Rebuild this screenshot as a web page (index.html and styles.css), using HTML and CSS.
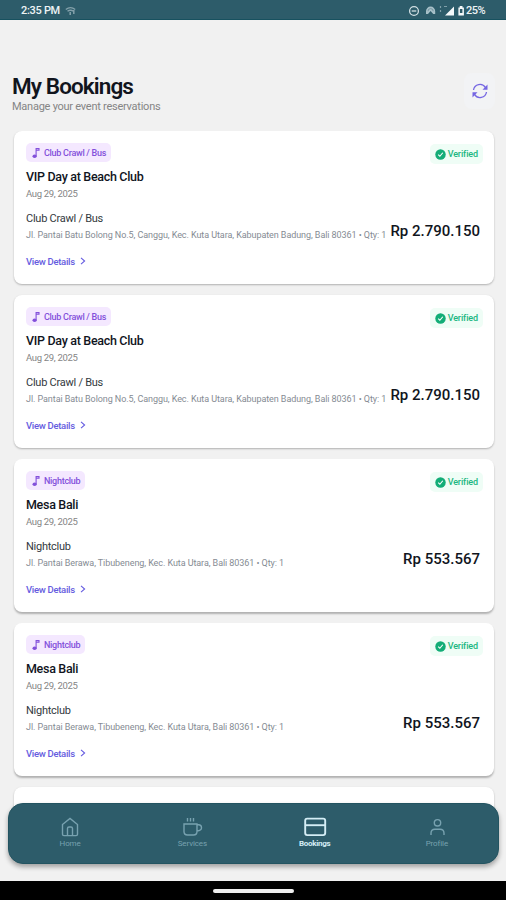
FILE: index.html
```html
<!DOCTYPE html>
<html lang="en">
<head>
<meta charset="utf-8">
<title>My Bookings</title>
<link rel="stylesheet" href="styles.css">
</head>
<body>
<svg class="defs" width="0" height="0">
  <symbol id="note" viewBox="0 0 10 12"><ellipse cx="3.6" cy="9.2" rx="2.1" ry="1.8" fill="currentColor"/><path d="M5.1 9.2V1.600H8v1.600H5.1" fill="none" stroke="currentColor" stroke-width="1.1"/></symbol>
  <symbol id="check" viewBox="0 0 12 12"><circle cx="6" cy="6" r="5.7" fill="currentColor"/><path d="M3.5 6.2l1.8 1.7 3.2-3.8" fill="none" stroke="#fff" stroke-width="1.2"/></symbol>
  <symbol id="chevron" viewBox="0 0 6 8"><path d="M1 .8L4.6 4 1 7.2" fill="none" stroke="currentColor" stroke-width="1.1"/></symbol>
</svg>
<div class="screen">
  <div class="status">
    <span class="time">2:35 PM</span>
    <svg class="wifi" width="11" height="10" viewBox="0 0 11 10" fill="none" stroke="#a9bfc7"><path d="M.8 3.500Q5.500-.3 10.200 3.500M2.500 5.300q3-2.200 6 0" stroke-width="1.400"/><path d="M5.200 6v3M8.800 4v4" stroke-width="1.500"/></svg>
    <div class="indicators">
      <svg width="58" height="14" viewBox="0 0 58 14">
        <g fill="none" stroke="#d3e0e4" stroke-width="1.300"><circle cx="6" cy="7" r="4.400"/><path d="M3.700 7h4.600"/></g>
        <path d="M18 10V7.200a4.600 4.600 0 0 1 9.200 0V10h-2l-2.600-3-2.600 3z" fill="#a7c0c8"/>
        <path d="M20 7.200a2.600 2.600 0 0 1 5.200 0" fill="none" stroke="#5e838f" stroke-width=".7"/>
        <path d="M32.500 2v2M32.500 6v2M36 2.500h3" stroke="#7f9fa9" stroke-width="1.200"/>
        <path d="M37 11.500L46 2.500v9z" fill="#f5f9fa"/>
        <path d="M51.700 2h2.800v1.400h1.400v8.200h-5.500V3.400h1.300z" fill="#f5f9fa"/><rect x="51.900" y="5" width="2.500" height="4" fill="#2d5c6a"/>
      </svg>
      <span class="percent">25%</span>
    </div>
  </div>
  <header class="header">
    <div>
      <h1 class="heading">My Bookings</h1>
      <p class="subtitle">Manage your event reservations</p>
    </div>
    <div class="refresh">
      <svg width="16" height="16" viewBox="0 0 16 16" fill="none" stroke="#7566e2" stroke-width="1.300"><path d="M1.500 7A6.500 6.500 0 0 1 13.500 4.600M14.500 9A6.500 6.500 0 0 1 2.500 11.400"/><path d="M15.500 1.500v5.200h-5zM.5 14.500V9.300h5z" fill="#7566e2" stroke="none"/></svg>
    </div>
  </header>
  <main class="list">
    <article class="card">
      <div class="top"><span class="tag"><svg width="10" height="12"><use href="#note"/></svg><span>Club Crawl / Bus</span></span><span class="verified"><svg width="11" height="11"><use href="#check"/></svg>Verified</span></div>
      <h2 class="title">VIP Day at Beach Club</h2>
      <p class="date">Aug 29, 2025</p>
      <div class="details"><div><p class="kind">Club Crawl / Bus</p><p class="address">Jl. Pantai Batu Bolong No.5, Canggu, Kec. Kuta Utara, Kabupaten Badung, Bali 80361 • Qty: 1</p></div><strong class="price">Rp 2.790.150</strong></div>
      <a class="view"><span>View Details</span><svg width="6" height="8"><use href="#chevron"/></svg></a>
    </article>
    <article class="card">
      <div class="top"><span class="tag"><svg width="10" height="12"><use href="#note"/></svg><span>Club Crawl / Bus</span></span><span class="verified"><svg width="11" height="11"><use href="#check"/></svg>Verified</span></div>
      <h2 class="title">VIP Day at Beach Club</h2>
      <p class="date">Aug 29, 2025</p>
      <div class="details"><div><p class="kind">Club Crawl / Bus</p><p class="address">Jl. Pantai Batu Bolong No.5, Canggu, Kec. Kuta Utara, Kabupaten Badung, Bali 80361 • Qty: 1</p></div><strong class="price">Rp 2.790.150</strong></div>
      <a class="view"><span>View Details</span><svg width="6" height="8"><use href="#chevron"/></svg></a>
    </article>
    <article class="card raised">
      <div class="top"><span class="tag"><svg width="10" height="12"><use href="#note"/></svg><span>Nightclub</span></span><span class="verified"><svg width="11" height="11"><use href="#check"/></svg>Verified</span></div>
      <h2 class="title">Mesa Bali</h2>
      <p class="date">Aug 29, 2025</p>
      <div class="details"><div><p class="kind">Nightclub</p><p class="address">Jl. Pantai Berawa, Tibubeneng, Kec. Kuta Utara, Bali 80361 • Qty: 1</p></div><strong class="price">Rp 553.567</strong></div>
      <a class="view"><span>View Details</span><svg width="6" height="8"><use href="#chevron"/></svg></a>
    </article>
    <article class="card raised">
      <div class="top"><span class="tag"><svg width="10" height="12"><use href="#note"/></svg><span>Nightclub</span></span><span class="verified"><svg width="11" height="11"><use href="#check"/></svg>Verified</span></div>
      <h2 class="title">Mesa Bali</h2>
      <p class="date">Aug 29, 2025</p>
      <div class="details"><div><p class="kind">Nightclub</p><p class="address">Jl. Pantai Berawa, Tibubeneng, Kec. Kuta Utara, Bali 80361 • Qty: 1</p></div><strong class="price">Rp 553.567</strong></div>
      <a class="view"><span>View Details</span><svg width="6" height="8"><use href="#chevron"/></svg></a>
    </article>
    <article class="card"></article>
  </main>
  <nav class="nav">
    <div class="item"><svg width="24" height="24" viewBox="0 0 24 24" fill="none" stroke="currentColor" stroke-width="1.400"><path d="M4.500 9.500L12 3.500l7.500 6v9.700q0 1.400-1.400 1.400H5.900q-1.400 0-1.400-1.400zM9.500 20.500v-7q0-1.500 1.500-1.500h2q1.500 0 1.500 1.500v7"/></svg><span>Home</span></div>
    <div class="item"><svg width="24" height="24" viewBox="0 0 24 24" fill="none" stroke="currentColor" stroke-width="1.400"><path d="M4 9h13v7.500q0 3.500-3.500 3.500h-6Q4 20 4 16.500zM17 9.700h1.500a2.300 2.300 0 0 1 0 6H17M7.500 3v3.500M10.500 3v3.500M13.500 3v3.500"/></svg><span>Services</span></div>
    <div class="item active"><svg width="24" height="24" viewBox="0 0 24 24" fill="none" stroke="currentColor" stroke-width="1.900"><rect x="2.200" y="3.600" width="20" height="16.500" rx="2"/><path d="M2.200 10.200h20"/></svg><span>Bookings</span></div>
    <div class="item"><svg width="24" height="24" viewBox="0 0 24 24" fill="none" stroke="currentColor" stroke-width="1.400"><circle cx="12.500" cy="7.800" r="3.200"/><path d="M6 20v-1.700q0-4 4-4h5q4 0 4 4V20"/></svg><span>Profile</span></div>
  </nav>
  <div class="system"><i class="handle"></i></div>
</div>
</body>
</html>
```
FILE: styles.css
```css
* { box-sizing: border-box; margin: 0; padding: 0; }
body { font-family: Roboto, sans-serif; background: #f1f1f1; color: #11151d; }
.defs { position: absolute; }
.screen { position: relative; display: flex; flex-direction: column; width: 506px; height: 900px; overflow: hidden; background: #f1f1f1; white-space: nowrap; }
.status { flex: none; height: 20px; display: flex; align-items: center; padding: 2px 19px 0 21px; background: #2d5c6a; border-bottom: 1px solid #17515f; color: #edf3f5; font-size: 11px; font-weight: 500; }
.time { width: 44px; letter-spacing: -.3px; }
.indicators { display: flex; align-items: center; margin-left: auto; }
.percent { width: 21px; letter-spacing: -.5px; }
.wifi { opacity: .7; }
.header { flex: none; height: 112px; display: flex; justify-content: space-between; padding: 53px 11px 0 12px; }
.heading { font-size: 22.500px; line-height: 27px; font-weight: 600; letter-spacing: -.9px; }
.subtitle { font-size: 11px; line-height: 14px; letter-spacing: -.25px; color: #858585; }
.refresh { display: grid; place-items: center; width: 31px; height: 36px; border-radius: 8px; background: #f2f3f5; }
.list { flex: 1; min-height: 0; overflow: hidden; margin: -1px 0 60px; padding: 0 12px 0 14px; display: flex; flex-direction: column; gap: 11px; }
.card { flex: none; height: 153px; border-radius: 8px; background: #fff; padding: 12px 14px 12px 12px; box-shadow: 0 1px 2px #0004; }
.card.raised { box-shadow: 0 2px 2px #0004; }
.top { display: flex; justify-content: space-between; height: 19px; }
.tag, .verified { display: flex; align-items: center; font-weight: 500; font-size: 9px; border-radius: 5px; }
.tag { height: 19px; padding: 0 5px; background: #f4e8ff; color: #8350db; gap: 3px; letter-spacing: -.28px; }
.verified { height: 20px; margin: 1px -3px 0 0; padding: 0 5px; background: #effdf6; color: #20b781; gap: 2px; letter-spacing: -.12px; }
.verified svg { color: #13ad77; }
.title { font-size: 12.500px; line-height: 17px; font-weight: 500; letter-spacing: -.31px; margin-top: 6px; }
.date { font-size: 9.500px; line-height: 14px; letter-spacing: -.32px; color: #858585; margin-top: 2px; }
.details { display: flex; align-items: center; justify-content: space-between; height: 35px; margin-top: 8px; }
.kind { font-size: 11px; line-height: 16px; letter-spacing: -.25px; color: #333940; }
.address { font-size: 9px; line-height: 16px; letter-spacing: -.07px; color: #858b93; }
.price { font-size: 15px; line-height: 22px; font-weight: 500; margin-top: 8px; }
.view { display: flex; align-items: center; gap: 5px; height: 16px; margin-top: 9px; color: #655ce0; font-size: 9.500px; font-weight: 500; letter-spacing: -.3px; }
.nav { position: absolute; left: 8px; top: 803px; width: 491px; height: 61px; display: grid; grid-template-columns: repeat(4, 1fr); border-radius: 15px; background: #2d5c6a; border: 1px solid #235461; box-shadow: 0 3px 5px #0005; }
.item { display: flex; flex-direction: column; align-items: center; padding-top: 11px; color: #78a2b0; font-size: 8px; line-height: 10px; letter-spacing: -.1px; }
.active { color: #d4edf5; font-weight: 700; letter-spacing: -.3px; }
.system { position: relative; flex: none; height: 19px; background: #000; display: flex; justify-content: center; padding-top: 8px; }
.handle { width: 81px; height: 4px; border-radius: 2px; background: #eee; }
```
